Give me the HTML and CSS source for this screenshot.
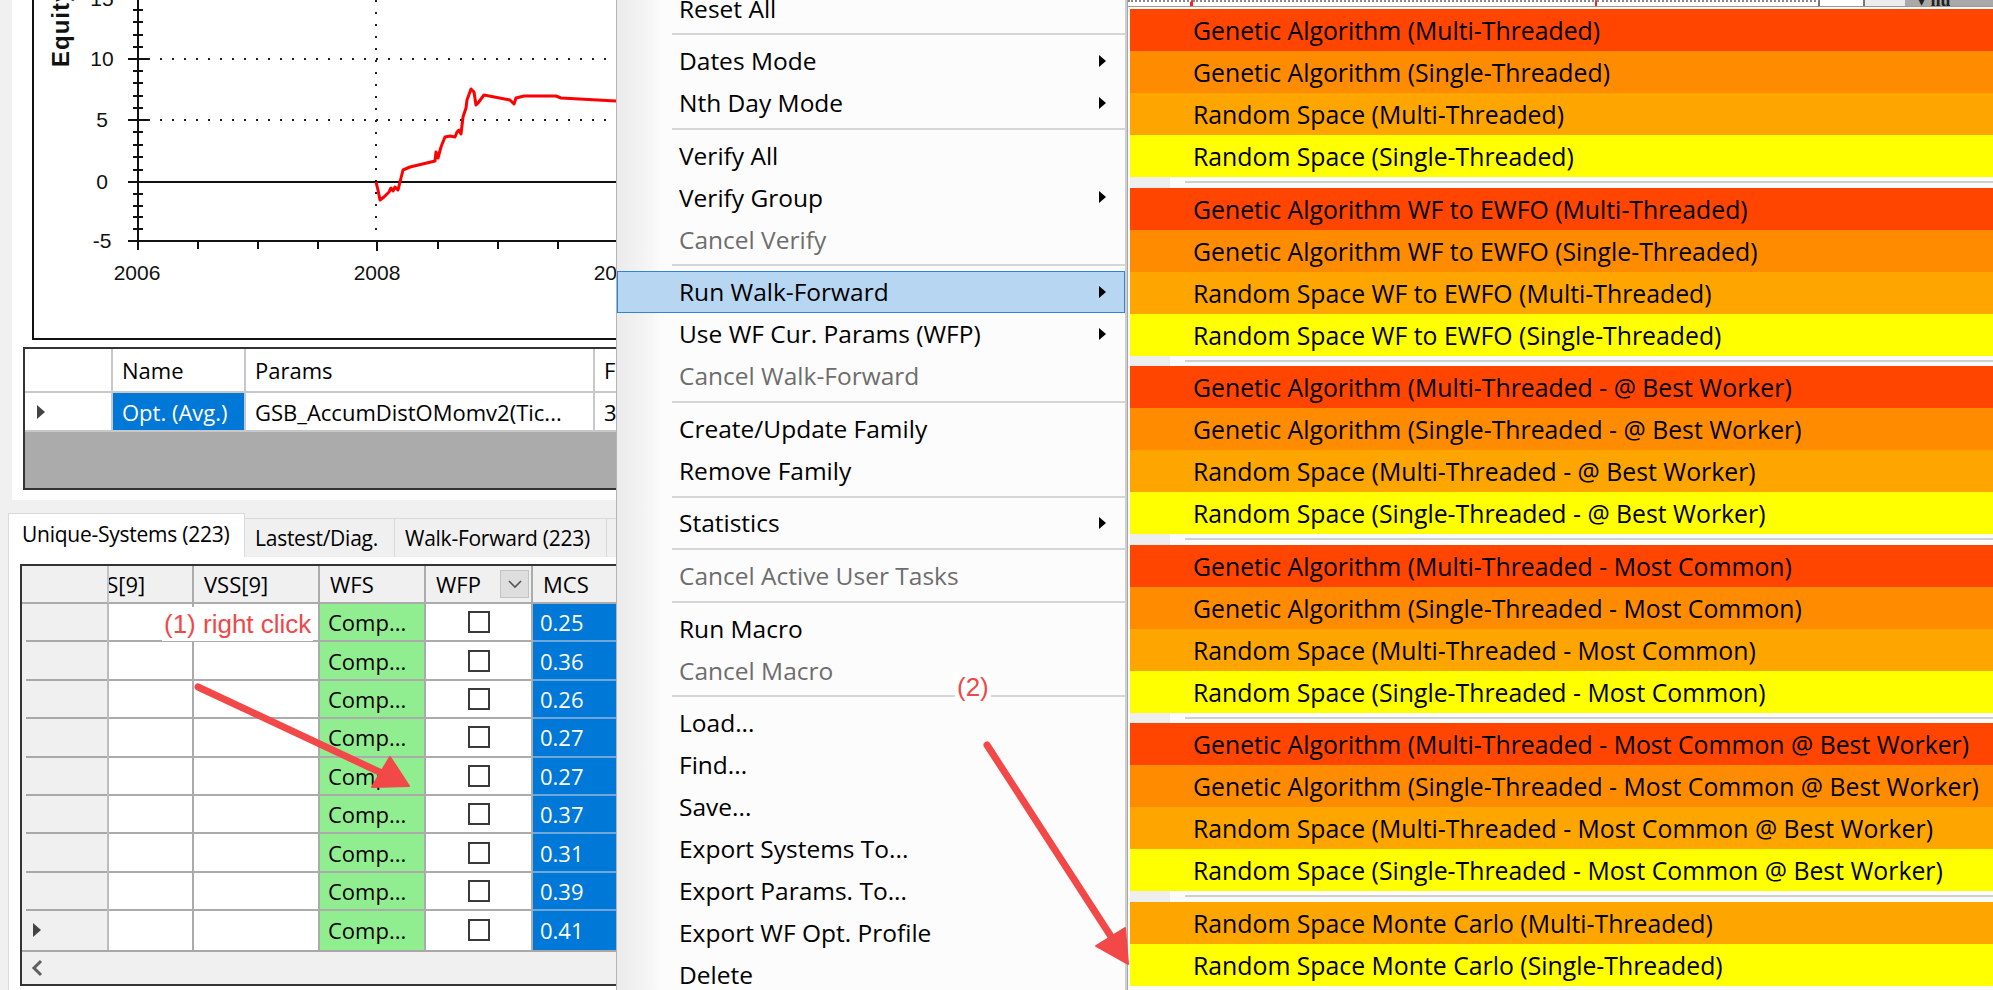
FILE: index.html
```html
<!DOCTYPE html>
<html lang="en">

<head>
    <meta charset="UTF-8">
    <title>Run Walk-Forward</title>
    <link rel="stylesheet" href="styles.css">
</head>

<body>
    <div class="screen">
        <section class="app">
            <div class="app-top">
                <svg class="chart" width="604" height="340" viewBox="12 0 604 340">
                    <g class="grid-dots">
                        <path d="M148 -2 H616 M148 59 H616 M148 120 H616 M376 0 V236" />
                    </g>
                    <g class="axis">
                        <path d="M33 -4 V339 H620" />
                        <path d="M138 -4 V250 M128 241 H620 M128 182 H620" />
                        <path d="M128 -2 H148 M128 59 H148 M128 120 H148" />
                        <path d="M133 10 H143 M133 22 H143 M133 35 H143 M133 47 H143
                                 M133 71 H143 M133 83 H143 M133 96 H143 M133 108 H143
                                 M133 132 H143 M133 145 H143 M133 157 H143 M133 170 H143
                                 M133 194 H143 M133 206 H143 M133 217 H143 M133 229 H143" />
                        <path d="M198 241 V249 M258 241 V249 M318 241 V249 M377 241 V251
                                 M438 241 V249 M498 241 V249 M558 241 V249" />
                    </g>
                    <g class="labels">
                        <text x="102" y="6">15</text>
                        <text x="102" y="66">10</text>
                        <text x="102" y="127">5</text>
                        <text x="102" y="189">0</text>
                        <text x="102" y="248">-5</text>
                        <text x="137" y="280">2006</text>
                        <text x="377" y="280">2008</text>
                        <text x="617" y="280">2010</text>
                    </g>
                    <text class="axis-title" transform="translate(69 67) rotate(-90)">Equity (%)</text>
                    <path class="equity" d="M376 182 L378 190 L380 200 L384 197 L389 192 L391 188 L393 191 L395 187
                        L398 190 L403 170 L410 167 L435 161 L436 152 L438 158 L441 147 L445 137 L450 136 L455 137
                        L457 132 L459 130 L461 134 L463 117 L466 108 L467 100 L471 89 L474 92 L476 105 L478 103
                        L484 95 L510 100 L514 104 L516 98 L524 96 L556 96 L561 98 L616 101" />
                </svg>

                <div class="mini-grid">
                    <div class="mg-row mg-head">
                        <div class="cell"></div>
                        <div class="cell">Name</div>
                        <div class="cell">Params</div>
                        <div class="cell">F</div>
                    </div>
                    <div class="mg-row mg-data">
                        <div class="cell"><span class="row-ptr"></span></div>
                        <div class="cell selected">Opt. (Avg.)</div>
                        <div class="cell">GSB_AccumDistOMomv2(Tic...</div>
                        <div class="cell">3</div>
                    </div>
                    <div class="mg-empty"></div>
                </div>
            </div>

            <div class="tabs">
                <div class="tab-strip">
                    <div class="tab active">Unique-Systems (223)</div>
                    <div class="tab tab-diag">Lastest/Diag.</div>
                    <div class="tab tab-wf">Walk-Forward (223)</div>
                    <div class="tab tab-more"></div>
                </div>
                <div class="tab-page">
                    <div class="data-grid">
                        <div class="dg-row dg-head">
                            <div class="cell"></div>
                            <div class="cell clip"><span class="cut">VSS[9]</span></div>
                            <div class="cell">VSS[9]</div>
                            <div class="cell">WFS</div>
                            <div class="cell wfp">WFP
                                <span class="drop">
                                    <svg width="14" height="9" viewBox="0 0 14 9"><path d="M1 1 L7 7 L13 1" /></svg>
                                </span>
                            </div>
                            <div class="cell">MCS</div>
                        </div>
                        <div id="rows"></div>
                        <div class="dg-scroll">
                            <svg width="12" height="18" viewBox="0 0 12 18"><path d="M10 2 L3 9 L10 16" /></svg>
                        </div>
                    </div>
                </div>
            </div>
        </section>

        <nav class="menu">
            <div class="menu-items">
                <div class="item">Reset All</div>
                <div class="sep"></div>
                <div class="item">Dates Mode <span class="arrow"></span></div>
                <div class="item">Nth Day Mode <span class="arrow"></span></div>
                <div class="sep"></div>
                <div class="item">Verify All</div>
                <div class="item">Verify Group <span class="arrow"></span></div>
                <div class="item disabled">Cancel Verify</div>
                <div class="sep"></div>
                <div class="item active">Run Walk-Forward <span class="arrow"></span></div>
                <div class="item">Use WF Cur. Params (WFP) <span class="arrow"></span></div>
                <div class="item disabled">Cancel Walk-Forward</div>
                <div class="sep"></div>
                <div class="item">Create/Update Family</div>
                <div class="item">Remove Family</div>
                <div class="sep"></div>
                <div class="item">Statistics <span class="arrow"></span></div>
                <div class="sep"></div>
                <div class="item disabled">Cancel Active User Tasks</div>
                <div class="sep"></div>
                <div class="item">Run Macro</div>
                <div class="item disabled">Cancel Macro</div>
                <div class="sep"></div>
                <div class="item">Load...</div>
                <div class="item">Find...</div>
                <div class="item">Save...</div>
                <div class="item">Export Systems To...</div>
                <div class="item">Export Params. To...</div>
                <div class="item">Export WF Opt. Profile</div>
                <div class="item">Delete</div>
            </div>
        </nav>

        <div class="submenu-col">
            <div class="behind">
                <span class="seg seg-a"></span>
                <span class="seg seg-b"></span>
                <span class="seg seg-c"></span>
                <span class="seg seg-d"></span>
                <span class="seg seg-e"></span>
                <span class="behind-btn">&#9662; <b>hu</b></span>
            </div>
            <div class="submenu" id="submenu"></div>
        </div>

        <svg class="annot" width="1993" height="990">
            <g class="arrow-line">
                <path d="M198 687 L388 776" />
                <path d="M987 745 L1112 938" />
            </g>
            <g class="arrow-head">
                <path d="M409 786 L372 787 L390 757 Z" />
                <path d="M1128 964 L1096 946 L1125 928 Z" />
            </g>
        </svg>
        <span class="note note-1">(1) right click</span>
        <span class="note note-2">(2)</span>
    </div>

    <script>
        const mcs = ['0.25', '0.36', '0.26', '0.27', '0.27', '0.37', '0.31', '0.39', '0.41'];
        const rows = document.getElementById('rows');
        mcs.forEach(function (v, i) {
            const last = i === mcs.length - 1;
            rows.insertAdjacentHTML('beforeend',
                '<div class="dg-row dg-data">' +
                '<div class="cell rh">' + (last ? '<span class="row-ptr"></span>' : '') + '</div>' +
                '<div class="cell"></div><div class="cell"></div>' +
                '<div class="cell wfs">Comp...</div>' +
                '<div class="cell center"><span class="cb"></span></div>' +
                '<div class="cell mcs">' + v + '</div>' +
                '</div>');
        });

        const colors = ['c1', 'c2', 'c3', 'c4'];
        const groups = [
            ['Genetic Algorithm (Multi-Threaded)', 'Genetic Algorithm (Single-Threaded)',
                'Random Space (Multi-Threaded)', 'Random Space (Single-Threaded)'],
            ['Genetic Algorithm WF to EWFO (Multi-Threaded)', 'Genetic Algorithm WF to EWFO (Single-Threaded)',
                'Random Space WF to EWFO (Multi-Threaded)', 'Random Space WF to EWFO (Single-Threaded)'],
            ['Genetic Algorithm (Multi-Threaded - @ Best Worker)', 'Genetic Algorithm (Single-Threaded - @ Best Worker)',
                'Random Space (Multi-Threaded - @ Best Worker)', 'Random Space (Single-Threaded - @ Best Worker)'],
            ['Genetic Algorithm (Multi-Threaded - Most Common)', 'Genetic Algorithm (Single-Threaded - Most Common)',
                'Random Space (Multi-Threaded - Most Common)', 'Random Space (Single-Threaded - Most Common)'],
            ['Genetic Algorithm (Multi-Threaded - Most Common @ Best Worker)',
                'Genetic Algorithm (Single-Threaded - Most Common @ Best Worker)',
                'Random Space (Multi-Threaded - Most Common @ Best Worker)',
                'Random Space (Single-Threaded - Most Common @ Best Worker)'],
            ['Random Space Monte Carlo (Multi-Threaded)', 'Random Space Monte Carlo (Single-Threaded)']
        ];
        const sub = document.getElementById('submenu');
        groups.forEach(function (g, gi) {
            if (gi > 0) sub.insertAdjacentHTML('beforeend', '<div class="sub-sep"></div>');
            const offset = 4 - g.length;
            g.forEach(function (label, i) {
                sub.insertAdjacentHTML('beforeend',
                    '<div class="sub-item ' + colors[i + offset] + '">' + label + '</div>');
            });
        });
    </script>
</body>

</html>
```

FILE: styles.css
```css
body {
    margin: 0;
    background-color: #f0f0f0;
    font-family: "Open Sans", "Noto Sans", sans-serif;
    color: #000;
    overflow: hidden;
}

.screen {
    position: relative;
    display: flex;
    width: 1993px;
    height: 990px;
    overflow: hidden;
}

/* ---------- left app window ---------- */

.app {
    width: 616px;
    flex: none;
    overflow: hidden;
    background-color: #f0f0f0;
}

.app-top {
    margin-left: 12px;
    height: 500px;
    background-color: #fff;
    overflow: hidden;
}

.chart {
    display: block;
}

.grid-dots path {
    fill: none;
    stroke: #222;
    stroke-width: 2;
    stroke-dasharray: 2 10;
}

.axis path {
    fill: none;
    stroke: #111;
    stroke-width: 2;
}

.labels text {
    font-family: "Liberation Sans", Arial, sans-serif;
    font-size: 21px;
    text-anchor: middle;
    fill: #111;
}

.axis-title {
    font-family: "Liberation Sans", Arial, sans-serif;
    font-size: 24px;
    font-weight: bold;
    letter-spacing: 1px;
    fill: #111;
}

.equity {
    fill: none;
    stroke: #ff0000;
    stroke-width: 3;
    stroke-linejoin: round;
}

.cell {
    box-sizing: border-box;
    display: flex;
    align-items: center;
    padding-left: 9px;
    white-space: nowrap;
    overflow: hidden;
    font-size: 22px;
}

.row-ptr {
    width: 0;
    height: 0;
    border-left: 8px solid #444;
    border-top: 7px solid transparent;
    border-bottom: 7px solid transparent;
}

.mini-grid {
    margin: 7px 0 0 11px;
    width: 700px;
    border: 2px solid #333;
    border-right: none;
}

.mg-row {
    display: grid;
    grid-template-columns: 88px 133px 349px 130px;
}

.mg-row .cell {
    border-right: 2px solid #c8c8c8;
    border-bottom: 2px solid #c8c8c8;
    background-color: #fff;
}

.mg-head {
    height: 44px;
}

.mg-data {
    height: 39px;
}

.mg-data .cell:first-child {
    padding-left: 12px;
}

.mg-row .selected {
    background-color: #0078d7;
    color: #fff;
}

.mg-empty {
    height: 56px;
    background-color: #ababab;
}

/* ---------- tabs + big grid ---------- */

.tabs {
    margin-top: 13px;
}

.tab-strip {
    display: flex;
    align-items: flex-end;
    height: 44px;
    padding-left: 8px;
}

.tab {
    flex: none;
    box-sizing: border-box;
    height: 39px;
    display: flex;
    align-items: center;
    padding-left: 10px;
    font-size: 21px;
    letter-spacing: -0.25px;
    background-color: #f0f0f0;
    border: 1px solid #d9d9d9;
    border-bottom: none;
    border-left: none;
    white-space: nowrap;
    overflow: hidden;
}

.tab.active {
    width: 237px;
    height: 44px;
    padding-left: 13px;
    padding-bottom: 4px;
    background-color: #fff;
    border-left: 1px solid #d9d9d9;
}

.tab-diag {
    width: 150px;
}

.tab-wf {
    width: 212px;
}

.tab-more {
    width: 40px;
}

.tab-page {
    margin-left: 8px;
    height: 433px;
    padding: 7px 0 0 11px;
    background-color: #fff;
    border-left: 1px solid #d9d9d9;
}

.data-grid {
    width: 700px;
    border: 2px solid #333;
    border-right: none;
}

.dg-row {
    display: grid;
    grid-template-columns: 87px 85px 126px 106px 107px 120px;
}

.dg-row .cell {
    border-right: 2px solid #ababab;
    border-bottom: 2px solid #ababab;
}

.dg-head {
    height: 38px;
}

.dg-head .cell {
    background-color: #f0f0f0;
    padding-left: 10px;
}

.dg-head .cell:first-child {
    border-right-color: #c4c4c4;
}

.dg-head .clip {
    padding-left: 0;
}

.cut {
    margin-left: -28px;
}

.drop {
    margin-left: auto;
    margin-right: 2px;
    width: 29px;
    height: 28px;
    box-sizing: border-box;
    display: flex;
    align-items: center;
    justify-content: center;
    background-color: #dedede;
    border: 1px solid #c2c2c2;
}

.drop path {
    fill: none;
    stroke: #555;
    stroke-width: 1.6;
}

.dg-data {
    height: 38.4px;
}

.dg-data .rh {
    background-color: #f0f0f0;
    border-bottom: none;
    border-right-color: #bdbdbd;
    background-image: linear-gradient(#a8a8a8, #a8a8a8);
    background-size: 81px 2px;
    background-position: 4px 100%;
    background-repeat: no-repeat;
    padding-left: 11px;
}

#rows .dg-data:last-child .cell {
    border-bottom: none;
    background-image: none;
}

.dg-data .wfs {
    background-color: #90ee90;
    padding-left: 8px;
}

.dg-data .center {
    justify-content: center;
    padding-left: 0;
}

.cb {
    width: 22px;
    height: 22px;
    box-sizing: border-box;
    border: 2px solid #3a3a3a;
    background-color: #fff;
}

.dg-data .mcs {
    background-color: #0078d7;
    color: #fff;
    padding-left: 7px;
    border-bottom-color: #6fa8d8;
}

.dg-scroll {
    height: 32px;
    border-top: 2px solid #a8a8a8;
    background-color: #f0f0f0;
    display: flex;
    align-items: center;
    padding-left: 9px;
}

.dg-scroll path {
    fill: none;
    stroke: #606060;
    stroke-width: 3;
}

/* ---------- context menu ---------- */

.menu {
    width: 511px;
    flex: none;
    box-sizing: border-box;
    overflow: hidden;
    border-left: 1px solid #b4b4b4;
    border-right: 2px solid #cfcfcf;
    background: linear-gradient(to right, #ebebeb, #f6f6f6 34px, #fcfcfc 44px);
}

.menu-items {
    margin-top: -13px;
}

.item {
    box-sizing: border-box;
    height: 42px;
    display: flex;
    align-items: center;
    justify-content: space-between;
    padding: 0 19px 0 62px;
    font-size: 24.5px;
    white-space: nowrap;
}

.item.disabled {
    color: #6d6d6d;
}

.item.active {
    background-color: #b7d6f2;
    border: 1px solid #2d84d8;
    padding-left: 61px;
    padding-right: 18px;
}

.arrow {
    width: 0;
    height: 0;
    border-left: 7px solid #000;
    border-top: 6px solid transparent;
    border-bottom: 6px solid transparent;
}

.sep {
    height: 10.6px;
    display: flex;
    align-items: center;
    padding-left: 55px;
}

.sep::after {
    content: '';
    flex: 1;
    height: 2px;
    background-color: #d6d6d6;
}

/* ---------- submenu ---------- */

.submenu-col {
    flex: 1;
    min-width: 0;
    display: flex;
    flex-direction: column;
}

.behind {
    height: 6px;
    display: flex;
    background-color: #fff;
    border-left: 1px solid #a7a7a7;
    border-bottom: 1px solid #9a9a9a;
    overflow: hidden;
}

.seg {
    box-sizing: border-box;
    height: 6px;
    border-top: 2px dotted #8a8a8a;
    flex: none;
}

.seg-a {
    width: 65px;
    border-right: 3px solid #ff2020;
}

.seg-b {
    width: 404px;
    border-right: 2px solid #ff2020;
}

.seg-c {
    width: 223px;
    border-right: 2px solid #777;
}

.seg-d {
    width: 45px;
    border-right: 2px solid #777;
    border-top: none;
}

.seg-e {
    width: 40px;
    border-top: none;
    background-color: #ececec;
}

.behind-btn {
    flex: 1;
    background-color: #a9a9a9;
    font-family: "Liberation Serif", serif;
    font-size: 18px;
    line-height: 0;
    padding: 0 0 0 12px;
    color: #222;
}

.submenu {
    flex: 1;
    border-left: 1px solid #a7a7a7;
    padding: 2px 0 0 2px;
    background-color: #fbfbfb;
}

.sub-item {
    box-sizing: border-box;
    height: 42px;
    display: flex;
    align-items: center;
    padding-left: 63px;
    font-size: 24.8px;
    white-space: nowrap;
    overflow: hidden;
}

.c1 { background-color: #ff4500; }
.c2 { background-color: #ff8c00; }
.c3 { background-color: #ffa500; }
.c4 { background-color: #ffff00; }

.sub-sep {
    height: 10.5px;
    display: flex;
    align-items: center;
    padding-left: 55px;
    background: linear-gradient(to right, #eeeeee 40px, #fbfbfb 40px);
}

.sub-sep::after {
    content: '';
    flex: 1;
    height: 2px;
    background-color: #cfcfcf;
}

/* ---------- annotations ---------- */

.annot {
    position: absolute;
    top: 0;
    left: 0;
    pointer-events: none;
}

.arrow-line path {
    fill: none;
    stroke: #f24848;
    stroke-width: 7;
    stroke-linecap: round;
}

.arrow-head path {
    fill: #f24848;
    stroke: #f24848;
    stroke-width: 2;
    stroke-linejoin: round;
}

.note {
    position: absolute;
    font-family: "Liberation Sans", Arial, sans-serif;
    font-size: 26px;
    line-height: 30px;
    color: #f04848;
    background-color: #fff;
}

.note-1 {
    left: 162px;
    top: 607px;
    padding: 2px 2px;
}

.note-2 {
    left: 955px;
    top: 672px;
    padding: 0 2px;
}
```
